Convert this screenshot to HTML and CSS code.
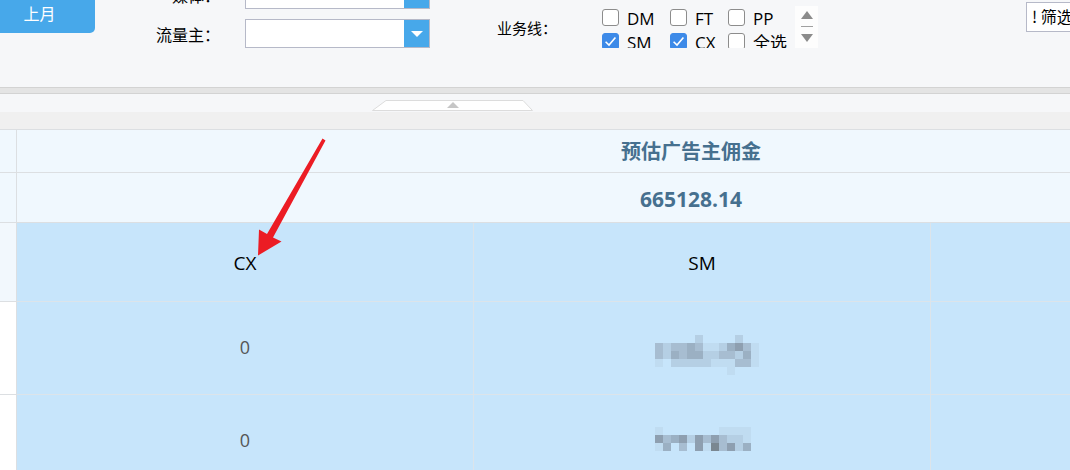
FILE: index.html
```html
<!DOCTYPE html>
<html lang="zh-CN">
<head>
<meta charset="utf-8">
<title>报表</title>
<link rel="stylesheet" href="styles.css">
</head>
<body>
<div class="page">
  <div class="filters">
    <div class="btn-month">上月</div>
    <div class="form-grid">
      <span class="lbl">媒体：</span>
      <div class="select"><span class="select-val"></span><span class="select-btn"><i class="tri"></i></span></div>
      <span class="lbl">流量主：</span>
      <div class="select"><span class="select-val"></span><span class="select-btn"><i class="tri"></i></span></div>
    </div>
    <div class="biz-lbl">业务线：</div>
    <div class="checklist">
      <div class="cb-grid">
        <span class="cb-item"><span class="cb"></span><span class="cb-txt">DM</span></span>
        <span class="cb-item"><span class="cb"></span><span class="cb-txt">FT</span></span>
        <span class="cb-item"><span class="cb"></span><span class="cb-txt">PP</span></span>
        <span class="cb-item"><span class="cb on"><svg viewBox="0 0 17 17" width="17" height="17"><path d="M3.6 8.8 L7 12.1 L13.4 4.6" fill="none" stroke="#fff" stroke-width="1.6"/></svg></span><span class="cb-txt">SM</span></span>
        <span class="cb-item"><span class="cb on"><svg viewBox="0 0 17 17" width="17" height="17"><path d="M3.6 8.8 L7 12.1 L13.4 4.6" fill="none" stroke="#fff" stroke-width="1.6"/></svg></span><span class="cb-txt">CX</span></span>
        <span class="cb-item"><span class="cb"></span><span class="cb-txt">全选</span></span>
      </div>
    </div>
    <div class="spinner">
      <span class="sp-up"></span>
      <span class="sp-sep"></span>
      <span class="sp-down"></span>
    </div>
    <div class="filter-btn">! 筛选条件</div>
  </div>

  <div class="band"></div>
  <div class="collapse-row">
    <svg class="collapse-tab" width="161" height="11" viewBox="0 0 161 11">
      <polygon points="0.5,10.5 14,0.5 151,0.5 160.5,10.5" fill="#fff" stroke="#dcdcdc"/>
      <polygon points="75,8 81,2 87,8" fill="#c6c6c6"/>
    </svg>
  </div>
  <div class="gray-row"></div>

  <div class="table">
    <div class="c-left hd"></div>
    <div class="c-span hd-title">预估广告主佣金</div>
    <div class="c-left hd"></div>
    <div class="c-span hd-value">665128.14</div>

    <div class="c-left lt"></div>
    <div class="c-body name">CX</div>
    <div class="c-body name">SM</div>
    <div class="c-body last"></div>

    <div class="c-left wt"></div>
    <div class="c-body num">0</div>
    <div class="c-body mosaic-cell">
      <div class="mosaic m13">
        <i></i><i></i><i></i><i></i><i></i><i class="m2"></i><i></i><i></i><i></i><i></i><i class="m2"></i><i></i><i></i>
        <i class="m3"></i><i class="m2"></i><i class="m3"></i><i class="m3"></i><i class="m4"></i><i class="m3"></i><i class="m1"></i><i class="m1"></i><i class="m2"></i><i class="m4"></i><i class="m5"></i><i class="m3"></i><i class="m1"></i>
        <i class="m3"></i><i class="m2"></i><i class="m4"></i><i class="m3"></i><i class="m4"></i><i class="m4"></i><i class="m2"></i><i class="m2"></i><i class="m3"></i><i class="m3"></i><i class="m2"></i><i class="m4"></i><i class="m1"></i>
        <i class="m1"></i><i></i><i class="m2"></i><i class="m2"></i><i class="m2"></i><i class="m2"></i><i class="m2"></i><i class="m1"></i><i class="m1"></i><i class="m1"></i><i class="m3"></i><i class="m3"></i><i class="m1"></i>
        <i></i><i></i><i></i><i></i><i></i><i></i><i></i><i></i><i></i><i class="m1"></i><i></i><i></i><i></i>
      </div>
    </div>
    <div class="c-body last"></div>

    <div class="c-left wt"></div>
    <div class="c-body num">0</div>
    <div class="c-body mosaic-cell">
      <div class="mosaic m12">
        <i class="m1"></i><i></i><i></i><i></i><i></i><i></i><i></i><i></i><i class="m1"></i><i class="m1"></i><i class="m1"></i><i class="m1"></i>
        <i class="m5"></i><i class="m3"></i><i class="m4"></i><i class="m5"></i><i class="m2"></i><i class="m5"></i><i class="m3"></i><i class="m5"></i><i class="m3"></i><i class="m2"></i><i class="m2"></i><i class="m1"></i>
        <i class="m1"></i><i class="m4"></i><i></i><i class="m3"></i><i></i><i class="m5"></i><i class="m1"></i><i class="m6"></i><i class="m3"></i><i class="m5"></i><i class="m2"></i><i class="m4"></i>
      </div>
    </div>
    <div class="c-body last"></div>
  </div>

  <svg class="annot" width="1070" height="470" viewBox="0 0 1070 470">
    <polygon points="322.5,138.5 325.5,140.5 273,237.5 281.5,241.5 258,255.5 259,229.5 267,234" fill="#ec1c24"/>
  </svg>
</div>
</body>
</html>
```

FILE: styles.css
```css
* { box-sizing: border-box; }
html, body { margin: 0; padding: 0; }
body {
  width: 1070px;
  height: 470px;
  overflow: hidden;
  background: #ffffff;
  font-family: "Open Sans", "Noto Sans CJK SC", sans-serif;
  color: #000;
}
.page {
  position: relative;
  width: 1070px;
  height: 470px;
  overflow: hidden;
}

/* ---------- filter bar ---------- */
.filters {
  display: flex;
  align-items: flex-start;
  height: 87px;
  background: #f6f7f9;
  overflow: hidden;
}
.btn-month {
  flex: none;
  margin-left: -16px;
  margin-top: -8px;
  width: 111px;
  height: 41px;
  background: #47a8ea;
  border-radius: 0 0 5px 0;
  color: #fff;
  font-family: "Noto Sans CJK SC", sans-serif;
  font-size: 16px;
  line-height: 16px;
  padding-top: 13px;
  text-align: center;
}
.form-grid {
  flex: none;
  margin-left: 45px;
  margin-top: -20px;
  display: grid;
  grid-template-columns: 80px 185px;
  grid-auto-rows: 29px;
  column-gap: 25px;
  row-gap: 10px;
}
.lbl {
  font-family: "Noto Sans CJK SC", sans-serif;
  font-size: 16px;
  text-align: right;
  display: flex;
  align-items: center;
  justify-content: flex-end;
  white-space: nowrap;
}
.select {
  display: flex;
  border: 1px solid #b6b9c8;
  background: #fff;
}
.select-val { flex: 1; }
.select-btn {
  width: 25px;
  background: #47a8ea;
  display: flex;
  align-items: center;
  justify-content: center;
}
.tri {
  width: 0;
  height: 0;
  border-left: 6px solid transparent;
  border-right: 6px solid transparent;
  border-top: 6px solid #fff;
  margin-top: 1px;
}
.biz-lbl {
  flex: none;
  margin-left: 67px;
  margin-top: 18px;
  width: 60px;
  font-family: "Noto Sans CJK SC", sans-serif;
  font-size: 15px;
  line-height: 20px;
  white-space: nowrap;
}
.checklist {
  flex: none;
  margin-left: 41px;
  width: 197px;
  height: 48px;
  overflow: hidden;
  padding: 9px 0 0 4px;
}
.cb-grid {
  display: grid;
  grid-template-columns: 68px 58px 70px;
  grid-auto-rows: 17px;
  row-gap: 7px;
}
.cb-item {
  display: flex;
  align-items: center;
  font-size: 17px;
  line-height: 17px;
  white-space: nowrap;
  font-family: "Open Sans", "Noto Sans CJK SC", sans-serif;
}
.cb-txt { padding-top: 2px; }
.cb {
  flex: none;
  width: 17px;
  height: 17px;
  margin-right: 8px;
  border: 1px solid #8c8c8c;
  border-radius: 3px;
  background: #fff;
  position: relative;
}
.cb.on {
  background: #3d8ae8;
  border-color: #3d8ae8;
}
.cb.on svg { position: absolute; left: -1px; top: -1px; }
.spinner {
  flex: none;
  margin-top: 6px;
  width: 23px;
  height: 42px;
  background: #fdfdfd;
  display: flex;
  flex-direction: column;
  align-items: center;
  padding-top: 5px;
}
.sp-up {
  width: 0; height: 0;
  border-left: 6px solid transparent;
  border-right: 6px solid transparent;
  border-bottom: 8px solid #8b8b8b;
}
.sp-sep {
  width: 12px;
  height: 1px;
  background: #a0a0a0;
  margin: 7px 0 7px;
}
.sp-down {
  width: 0; height: 0;
  border-left: 6px solid transparent;
  border-right: 6px solid transparent;
  border-top: 8px solid #8b8b8b;
}
.filter-btn {
  flex: none;
  margin-left: 208px;
  margin-top: 2px;
  width: 110px;
  height: 30px;
  border: 1px solid #b6b9c8;
  background: #fff;
  font-family: "Noto Sans CJK SC", sans-serif;
  font-size: 16px;
  line-height: 27px;
  padding-left: 5px;
  white-space: nowrap;
  overflow: hidden;
}

/* ---------- separators ---------- */
.band {
  height: 7px;
  background: #e4e4e4;
  border-top: 1px solid #d3d3d3;
  border-bottom: 1px solid #d3d3d3;
}
.collapse-row {
  height: 18px;
  background: #f6f7f9;
  display: flex;
  align-items: flex-end;
  padding-left: 372px;
  padding-bottom: 1px;
}
.collapse-tab { display: block; }
.gray-row {
  height: 17px;
  background: #f0f0f0;
}

/* ---------- table ---------- */
.table {
  display: grid;
  grid-template-columns: 17px 457px 457px 434px;
  grid-template-rows: 43px 50px 79px 93px 93px;
  border-top: 1px solid #dcdfe2;
  width: 1365px;
}
.c-left {
  border-right: 1px solid #dcdfe2;
  border-bottom: 1px solid #dcdfe2;
}
.c-left.hd { background: #f0f8fe; }
.c-left.lt { background: #f2f8fd; }
.c-left.wt { background: #ffffff; }
.c-span {
  grid-column: 2 / 5;
  background: #f0f8fe;
  border-bottom: 1px solid #dcdfe2;
  display: flex;
  align-items: center;
  justify-content: center;
  color: #46708f;
  font-weight: 700;
  font-size: 20px;
}
.hd-title {
  font-family: "Noto Sans CJK SC", sans-serif;
  padding-bottom: 2px;
}
.hd-value {
  font-family: "Open Sans", sans-serif;
  font-size: 21px;
  padding-top: 3px;
}
.c-body {
  background: #c7e5fb;
  border-right: 1px solid #dce4ea;
  border-bottom: 1px solid #dce4ea;
  display: flex;
  align-items: center;
  justify-content: center;
}
.c-body.last { border-right: none; }
.name {
  font-size: 19px;
  color: #000;
  padding-top: 2px;
}
.num {
  font-size: 18px;
  color: #555;
  padding-bottom: 2px;
}
.mosaic-cell {
  justify-content: flex-start;
  padding-left: 181px;
}
.mosaic {
  display: grid;
  grid-auto-rows: 8px;
}
.mosaic.m13 { grid-template-columns: repeat(13, 8px); margin-top: 14px; }
.mosaic.m12 { grid-template-columns: repeat(12, 8px); margin-top: -5px; }
.mosaic i { display: block; }
.mosaic i.m1 { background: #c0dcf1; }
.mosaic i.m2 { background: #b5cfe4; }
.mosaic i.m3 { background: #a7bdd1; }
.mosaic i.m4 { background: #9bb0c3; }
.mosaic i.m5 { background: #8e9fb0; }
.mosaic i.m6 { background: #7a8791; }

/* ---------- annotation ---------- */
.annot {
  position: absolute;
  left: 0;
  top: 0;
  pointer-events: none;
}
```
